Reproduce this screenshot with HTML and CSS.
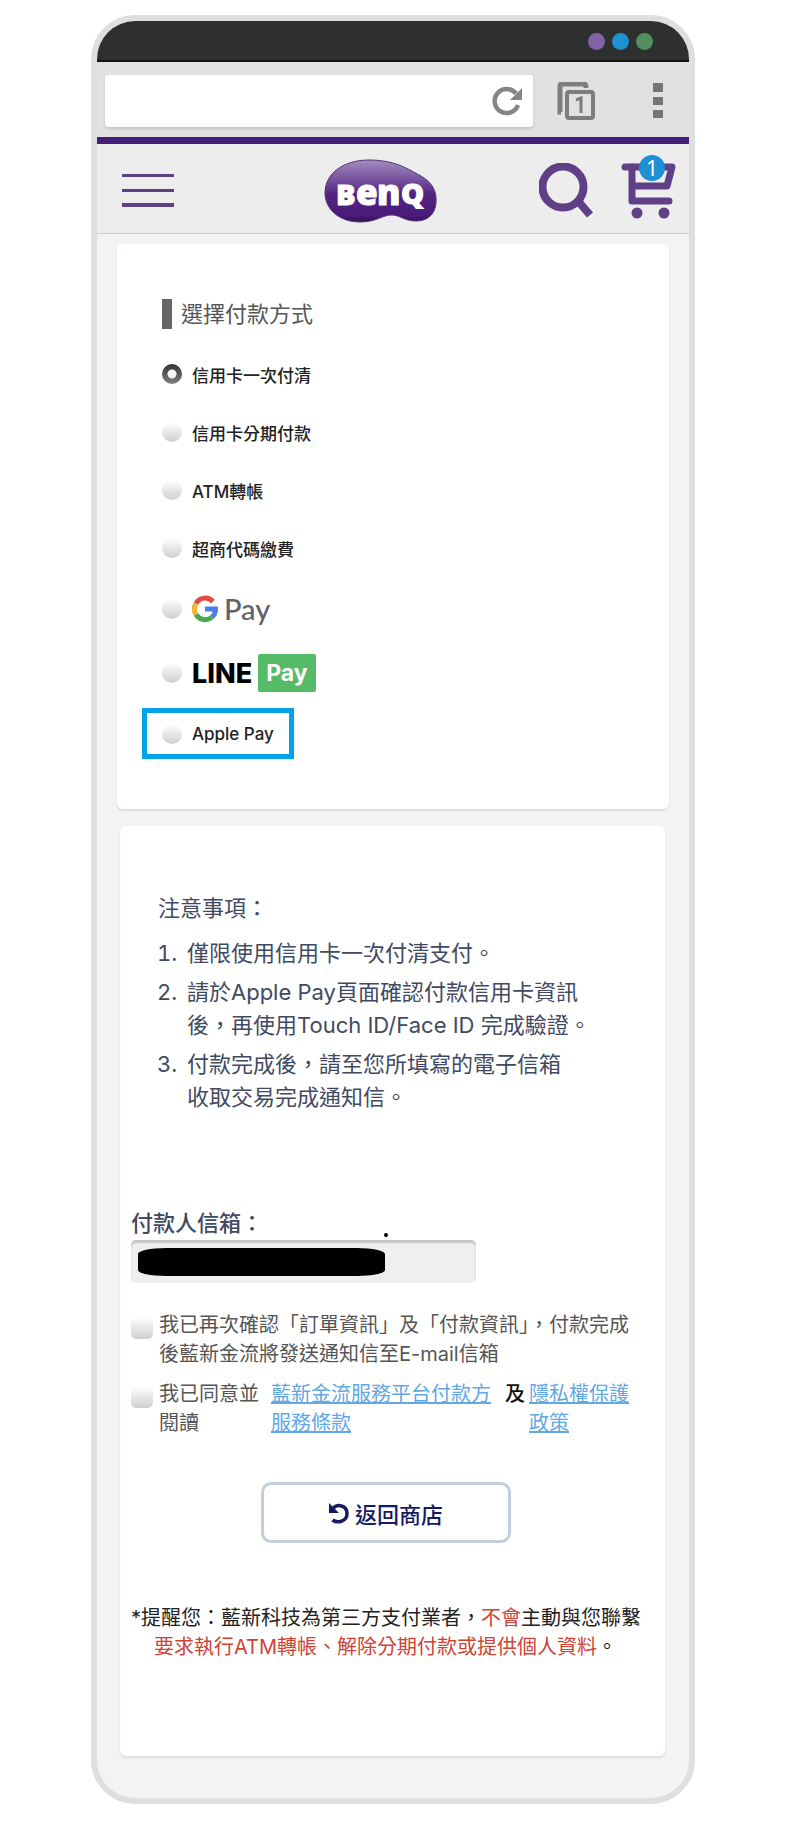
FILE: index.html
```
<!DOCTYPE html>
<html lang="zh-Hant">
<head>
    <meta charset="UTF-8">
    <meta name="viewport" content="width=device-width, initial-scale=1.0">
    <title>選擇付款方式</title>
    <link rel="stylesheet" href="styles.css">
</head>
<body>
    <div class="phone">
        <div class="status-bar">
            <span class="dot purple"></span>
            <span class="dot blue"></span>
            <span class="dot green"></span>
        </div>
        <div class="browser-bar">
            <div class="address">
                <input type="text" aria-label="網址">
                <button type="button" aria-label="重新整理">
                    <svg width="32" height="30" viewBox="0 0 32 30">
                        <path d="M24 7.500A12 12 0 1 0 26 19" fill="none" stroke="#858585" stroke-width="4.500"/>
                        <path d="M30 2v12H18z" fill="#858585"/>
                    </svg>
                </button>
            </div>
            <button type="button" class="tabs" aria-label="分頁">
                <svg width="38" height="38" viewBox="0 0 38 38" fill="none" stroke="#7d7d7d" stroke-width="4">
                    <path d="M4 30H3V4q0-2 2-2h22q2 0 2 4" stroke-width="5"/>
                    <rect x="10" y="10" width="26" height="26" rx="2"/>
                    <path d="M19 18l5-2v15" stroke-width="3"/>
                </svg>
            </button>
            <button type="button" class="more" aria-label="更多">
                <svg width="10" height="36" viewBox="0 0 10 36" fill="#757575">
                    <rect y="0" width="10" height="9"/>
                    <rect y="14" width="10" height="8"/>
                    <rect y="27" width="10" height="8"/>
                </svg>
            </button>
        </div>
        <header class="header">
            <button type="button" aria-label="選單">
                <svg width="52" height="34" viewBox="0 0 52 34" fill="#5c4183">
                    <rect y="0" width="52" height="3"/>
                    <rect y="15" width="52" height="3"/>
                    <rect y="29" width="52" height="4"/>
                </svg>
            </button>
            <a href="#" class="logo" aria-label="BenQ">
                <svg width="114" height="64" viewBox="0 0 114 64">
                    <defs>
                        <linearGradient id="bean" x1="0" y1="0" x2="0" y2="1">
                            <stop offset="0" stop-color="#a58bc0"/>
                            <stop offset="0.3" stop-color="#7a559f"/>
                            <stop offset="0.55" stop-color="#522481"/>
                            <stop offset="0.9" stop-color="#4b1a7a"/>
                            <stop offset="1" stop-color="#2c1450"/>
                        </linearGradient>
                    </defs>
                    <path d="M45 1C71 1 84 10 97 17C109 24 113 33 112 44C111 56 103 62 92 62C80 62 76 56 68 56C58 56 53 63 36 63C15 63 1 50 1 34C1 14 20 1 45 1z" fill="url(#bean)" stroke="#52357a" stroke-width="1"/>
                    <g fill="#fff" stroke="#fff" stroke-width="1" font-family="Open Sans" font-weight="800">
                        <text x="12" y="46" font-size="29">B</text>
                        <text x="32" y="46" font-size="35">e</text>
                        <text x="53" y="46" font-size="35">n</text>
                        <text x="77" y="45" font-size="29">Q</text>
                    </g>
                </svg>
            </a>
            <div class="header-right">
                <button type="button" aria-label="搜尋">
                    <svg width="56" height="56" viewBox="0 0 56 56" fill="none" stroke="#5f4087">
                        <circle cx="24" cy="24" r="20.500" stroke-width="8"/>
                        <path d="M39 38L51 52" stroke-width="8"/>
                    </svg>
                </button>
                <a href="#" class="cart" aria-label="購物車">
                    <svg width="56" height="56" viewBox="0 0 56 56" fill="none" stroke="#5f4087" stroke-width="7" stroke-linecap="round" stroke-linejoin="round">
                        <path d="M4 4H11V38H48"/>
                        <path d="M11 4H51L46 23H12"/>
                        <circle cx="16" cy="50" r="5.500" fill="#5f4087" stroke="none"/>
                        <circle cx="43" cy="50" r="5.500" fill="#5f4087" stroke="none"/>
                    </svg>
                    <span class="badge">1</span>
                </a>
            </div>
        </header>

        <form>
            <fieldset class="card pay-card">
                <legend class="card-title">選擇付款方式</legend>
                <label class="option"><input type="radio" name="pay" checked>信用卡一次付清</label>
                <label class="option"><input type="radio" name="pay">信用卡分期付款</label>
                <label class="option"><input type="radio" name="pay">ATM轉帳</label>
                <label class="option"><input type="radio" name="pay">超商代碼繳費</label>
                <label class="option tall">
                    <input type="radio" name="pay">
                    <svg width="26" height="28" viewBox="0 0 26 28" fill="none" stroke-width="5">
                        <path d="M21 6.500A10.500 10.500 0 0 0 4 8.500" stroke="#e04a3f"/>
                        <path d="M4 8.500A10.500 10.500 0 0 0 4 19.500" stroke="#f2b531"/>
                        <path d="M4 19.500A10.500 10.500 0 0 0 20 22" stroke="#4aa653"/>
                        <path d="M20 22A10.500 10.500 0 0 0 23.500 14H13" stroke="#4c7fe8"/>
                    </svg>
                    <span class="gpay">Pay</span>
                </label>
                <label class="option tall">
                    <input type="radio" name="pay">
                    <span class="line">LINE</span>
                    <span class="line-pay">Pay</span>
                </label>
                <label class="option current"><input type="radio" name="pay">Apple Pay</label>
            </fieldset>

            <section class="card info-card">
                <h2 class="note-title">注意事項：</h2>
                <ol class="notes">
                    <li>僅限使用信用卡一次付清支付。</li>
                    <li>請於Apple Pay頁面確認付款信用卡資訊<br>後，再使用Touch ID/Face ID 完成驗證。</li>
                    <li>付款完成後，請至您所填寫的電子信箱<br>收取交易完成通知信。</li>
                </ol>
                <label class="mail-label" for="mail">付款人信箱：</label>
                <div class="mail">
                    <input type="email" id="mail">
                    <span class="mask"></span>
                </div>
                <div class="agree">
                    <input type="checkbox" id="confirm">
                    <label for="confirm">我已再次確認「訂單資訊」及「付款資訊」，付款完成<br>後藍新金流將發送通知信至E-mail信箱</label>
                </div>
                <div class="agree">
                    <input type="checkbox" id="read">
                    <label for="read" class="read">我已同意並閱讀</label>
                    <a href="#" class="terms">藍新金流服務平台付款方服務條款</a>
                    <b>及</b>
                    <a href="#" class="privacy">隱私權保護政策</a>
                </div>
                <button type="button" class="back">
                    <svg width="22" height="22" viewBox="0 0 22 22">
                        <path d="M5 6.500C9 1.500 19 3 19 11.500C19 20 9 21.500 4.500 18" fill="none" stroke="#161a63" stroke-width="3.500"/>
                        <path d="M1 1v10h10z" fill="#161a63"/>
                    </svg>
                    返回商店
                </button>
                <p class="remind">*提醒您：藍新科技為第三方支付業者，<em>不會</em>主動與您聯繫<br><em>要求執行ATM轉帳、解除分期付款或提供個人資料</em>。</p>
            </section>
        </form>
    </div>
</body>
</html>
```
FILE: styles.css
```
* {
    box-sizing: border-box;
}
body {
    margin: 0;
    padding: 15px 105px 44px 91px;
    background: #fff;
    font-family: Inter, "Noto Sans CJK TC", sans-serif;
}
button {
    padding: 0;
    border: 0;
    background: none;
    font-family: inherit;
}
svg {
    display: block;
}
.phone {
    border: 6px solid #dedfdf;
    border-radius: 44px;
    background: #f4f2f3;
    overflow: hidden;
}

/* browser */
.status-bar {
    display: flex;
    align-items: center;
    justify-content: flex-end;
    gap: 7px;
    height: 41px;
    padding: 2px 36px 0 0;
    background: #2e302f;
    border-bottom: 2px solid #111;
}
.dot {
    width: 17px;
    height: 17px;
    border-radius: 50%;
}
.purple {
    background: #8264a6;
}
.blue {
    background: #1e90d4;
}
.green {
    background: #548d60;
}
.browser-bar {
    display: flex;
    align-items: center;
    height: 75px;
    padding: 3px 26px 0 8px;
    background: #e1e1e1;
}
.address {
    display: flex;
    align-items: center;
    flex: 1;
    height: 52px;
    margin-right: 24px;
    padding-right: 9px;
    border-radius: 3px;
    background: #fff;
    box-shadow: 0 2px 3px #c4c4c4;
}
.address input {
    flex: 1;
    min-width: 0;
    border: 0;
    background: none;
}
.tabs {
    margin-right: 58px;
}

/* site header */
.header {
    display: flex;
    align-items: center;
    justify-content: space-between;
    height: 97px;
    padding: 4px 12px 0 25px;
    border-top: 7px solid #43217a;
    border-bottom: 1px solid #ccc;
    background: #ededed;
}
.logo {
    margin-left: 48px;
}
.header-right {
    display: flex;
    gap: 26px;
}
.cart {
    position: relative;
}
.badge {
    position: absolute;
    top: -8px;
    left: 18px;
    width: 26px;
    height: 26px;
    border-radius: 50%;
    background: #1e90d4;
    color: #fff;
    font: 21px/26px "Noto Sans", sans-serif;
    text-align: center;
}

/* cards */
.card {
    border: 0;
    border-radius: 6px;
    background: #fff;
    box-shadow: 0 2px 2px #dcdcdc;
}
.pay-card {
    min-width: 0;
    margin: 10px 20px 17px;
    padding: 55px 45px 50px;
}
.card-title {
    float: left;
    width: 100%;
    margin-bottom: 16px;
    padding: 0 0 0 9px;
    border-left: 10px solid #666;
    color: #555;
    font-size: 22px;
    line-height: 30px;
}
.option {
    display: flex;
    align-items: center;
    clear: both;
    height: 58px;
    color: #222;
    font-size: 17px;
    font-weight: 500;
}
.option.tall {
    height: 64px;
}
.option.current {
    width: 152px;
    height: 51px;
    margin: 3px 0 0 -20px;
    padding-left: 15px;
    border: 5px solid #00a2e8;
}
input[type="radio"],
input[type="checkbox"] {
    appearance: none;
    flex: none;
    margin: 0;
    background: linear-gradient(#fff, #cfcfcf);
}
input[type="radio"] {
    width: 20px;
    height: 20px;
    margin-right: 10px;
    border-radius: 50%;
}
input[type="radio"]:checked {
    background: radial-gradient(#f4f4f4 4px, transparent 5px), linear-gradient(#333, #808080);
}
.gpay {
    margin-left: 6px;
    color: #5f6368;
    font: 500 29px/36px Lato, sans-serif;
}
.line {
    margin-right: 6px;
    color: #000;
    font-size: 27px;
    font-weight: 800;
}
.line-pay {
    padding: 0 8px;
    border-radius: 2px;
    background: #56bb66;
    color: #fff;
    font-size: 23px;
    font-weight: 700;
    line-height: 38px;
}
.info-card {
    margin: 0 24px 42px 23px;
    padding: 66px 25px 94px 11px;
}
.note-title {
    margin: 0 0 12px;
    padding-left: 27px;
    color: #414a62;
    font-size: 22px;
    font-weight: 400;
    line-height: 33px;
}
.notes {
    margin: 0 0 92px;
    padding-left: 52px;
    color: #414a62;
    font-size: 22px;
    line-height: 33px;
}
.notes li {
    padding-left: 4px;
}
.notes li + li {
    margin-top: 6px;
}
.mail-label {
    display: block;
    color: #414a62;
    font-size: 22px;
    font-weight: 500;
    line-height: 34px;
}
.mail {
    position: relative;
    width: 345px;
    margin-bottom: 28px;
}
.mail input {
    display: block;
    width: 100%;
    height: 43px;
    border: 0;
    border-radius: 5px;
    background: #efefef;
    box-shadow: inset 0 3px 2px #c4c4c4;
}
.mask {
    position: absolute;
    top: 8px;
    left: 7px;
    width: 247px;
    height: 28px;
    border-radius: 28px / 6px;
    background: #000;
}
.mask::after {
    content: "";
    position: absolute;
    top: -15px;
    right: -3px;
    width: 4px;
    height: 4px;
    border-radius: 50%;
    background: #000;
}
.agree {
    display: flex;
    align-items: flex-start;
    margin-bottom: 11px;
    color: #555;
    font-size: 20px;
    line-height: 29px;
    white-space: nowrap;
}
.agree input {
    width: 22px;
    height: 22px;
    margin: 6px 6px 0 0;
    border-radius: 5px;
}
.agree a {
    color: #62a8e5;
    white-space: normal;
}
.agree b {
    margin-right: 4px;
    color: #111;
    font-weight: 500;
}
.read {
    width: 100px;
    margin-right: 12px;
    white-space: normal;
}
.terms {
    width: 220px;
    margin-right: 14px;
}
.agree .privacy {
    width: 100px;
}
.back {
    display: flex;
    align-items: center;
    justify-content: center;
    gap: 5px;
    width: 250px;
    height: 61px;
    margin: 44px auto 61px;
    border: 3px solid #c3cddb;
    border-radius: 10px;
    color: #161a63;
    font-size: 22px;
    font-weight: 500;
}
.remind {
    margin: 0;
    color: #222;
    font-size: 20px;
    line-height: 29px;
    text-align: center;
    white-space: nowrap;
}
.remind em {
    color: #cf4335;
    font-style: normal;
}
```
